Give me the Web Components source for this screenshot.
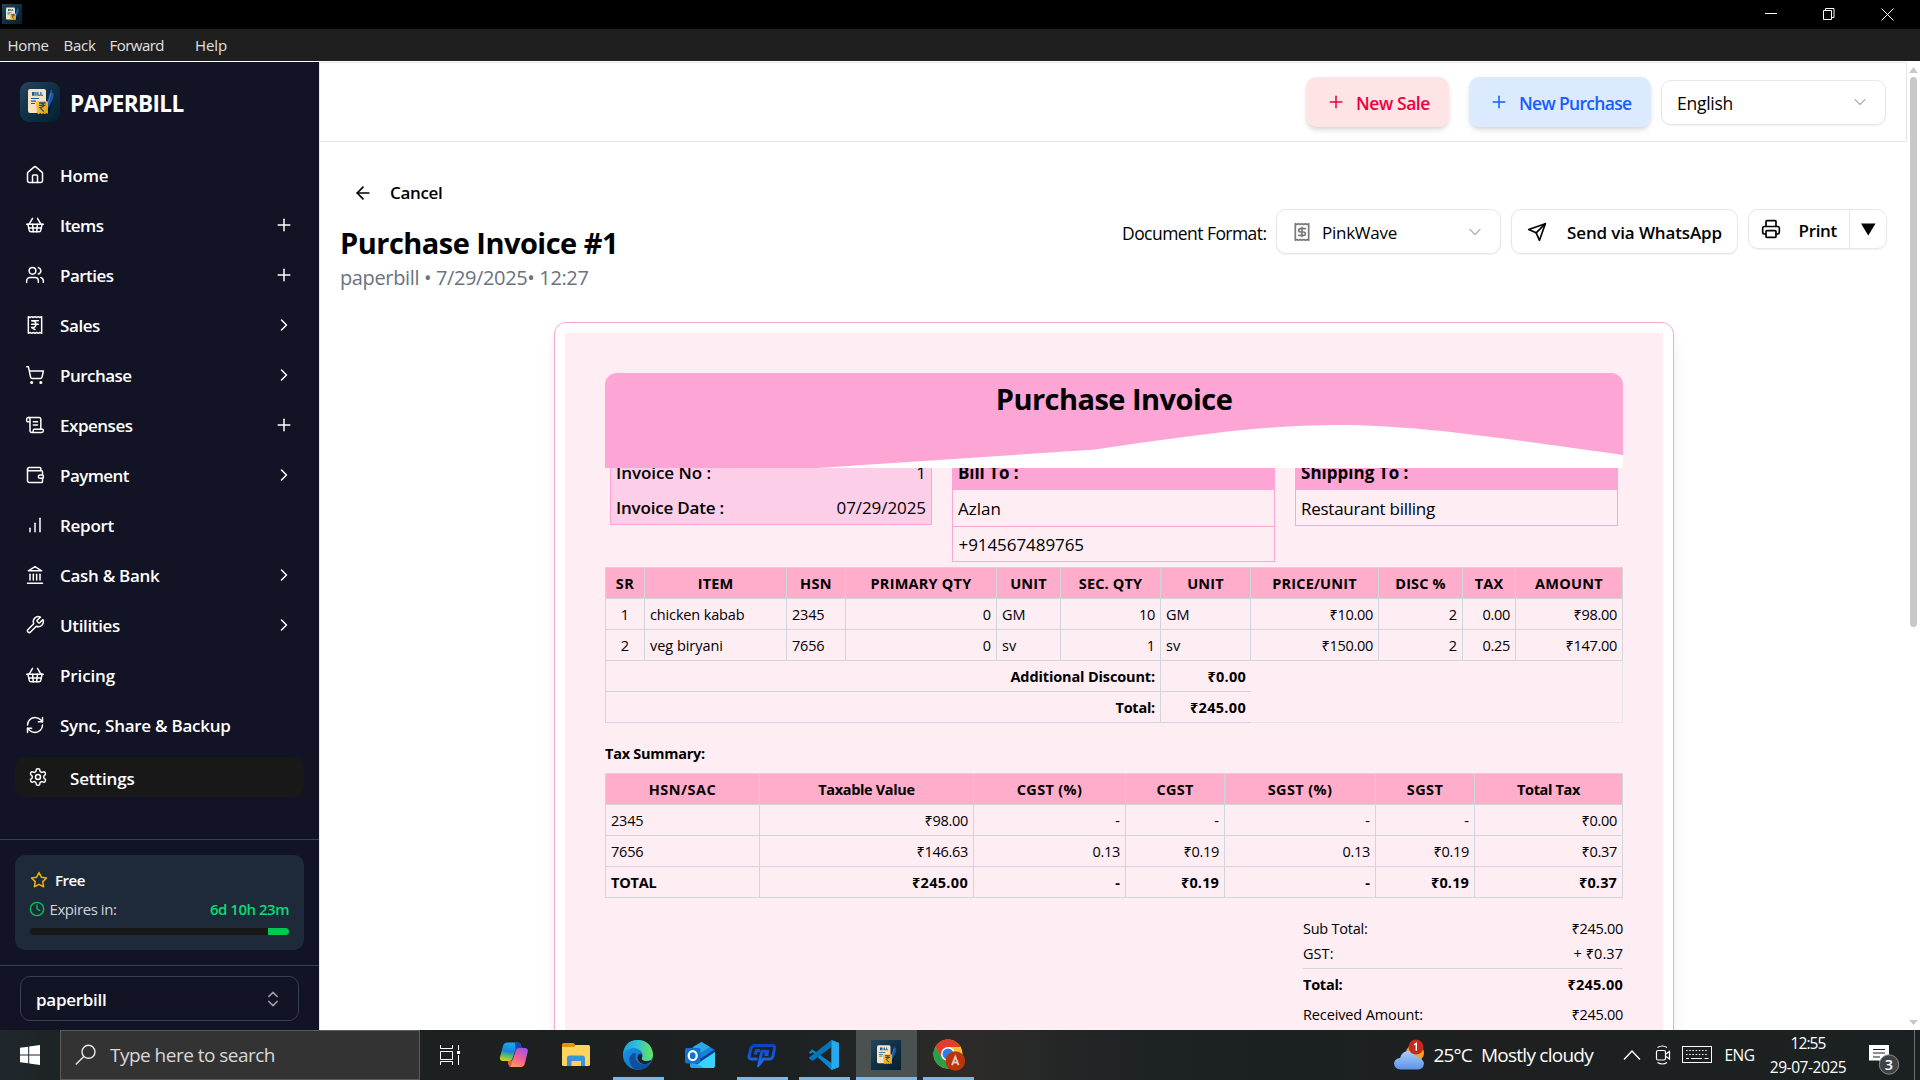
<!DOCTYPE html>
<html lang="en">
<head>
<meta charset="utf-8">
<title>Paperbill</title>
<style>
html,body{margin:0;padding:0;height:100%;overflow:hidden;background:#fff}
body{font-family:"Open Sans","Noto Sans",sans-serif;color:#000}
</style>
</head>
<body>
<bill-app></bill-app>
<script>
const define=(name,html,after)=>{
  const t=document.createElement('template');
  t.innerHTML=html;
  customElements.define(name,class extends HTMLElement{
    connectedCallback(){
      if(this.shadowRoot)return;
      const r=this.attachShadow({mode:'open'});
      r.append(t.content.cloneNode(true));
      if(after)after(this,r);
    }
  });
};

/* One line of text: s = size, b = weight, c = colour, w = advance width, y = drop below centre */
define('ui-text',`<style>:host{display:inline-block;white-space:nowrap;line-height:1.2;flex:none;text-align:left;padding-top:2px}</style><slot></slot>`,(h)=>{
  const a=n=>h.getAttribute(n);
  if(a('s'))h.style.fontSize=a('s')+'px';
  if(a('b'))h.style.fontWeight=a('b');
  if(a('c'))h.style.color=a('c');
  if(a('y'))h.style.paddingTop=2*a('y')+'px';
  const w=parseFloat(a('w')),n=h.textContent.length;
  if(w&&n>1){
    const nat=h.getBoundingClientRect().width;
    h.style.letterSpacing=((w-nat)/n).toFixed(4)+'px';
    h.style.width=w+'px';
  }
});

const ICONS={
 home:'<path d="M15 21v-8a1 1 0 0 0-1-1h-4a1 1 0 0 0-1 1v8"/><path d="M3 10a2 2 0 0 1 .709-1.528l7-5.999a2 2 0 0 1 2.582 0l7 5.999A2 2 0 0 1 21 10v9a2 2 0 0 1-2 2H5a2 2 0 0 1-2-2z"/>',
 basket:'<path d="m15 11-1 9"/><path d="m19 11-4-7"/><path d="M2 11h20"/><path d="m3.5 11 1.6 7.4a2 2 0 0 0 2 1.6h9.8a2 2 0 0 0 2-1.6l1.7-7.4"/><path d="M4.5 15.5h15"/><path d="m5 11 4-7"/><path d="m9 11 1 9"/>',
 users:'<path d="M16 21v-2a4 4 0 0 0-4-4H6a4 4 0 0 0-4 4v2"/><circle cx="9" cy="7" r="4"/><path d="M22 21v-2a4 4 0 0 0-3-3.87"/><path d="M16 3.13a4 4 0 0 1 0 7.75"/>',
 rupee:'<path d="M4 2v20l2-1 2 1 2-1 2 1 2-1 2 1 2-1 2 1V2l-2 1-2-1-2 1-2-1-2 1-2-1-2 1Z"/><path d="M8 7h8"/><path d="M12 17.5 8 15h1a4 4 0 0 0 0-8"/><path d="M8 11h8"/>',
 receipt:'<path d="M4 2v20l2-1 2 1 2-1 2 1 2-1 2 1 2-1 2 1V2l-2 1-2-1-2 1-2-1-2 1-2-1-2 1Z"/><path d="M16 8h-6a2 2 0 1 0 0 4h4a2 2 0 1 1 0 4H8"/><path d="M12 17.5v-11"/>',
 cart:'<circle cx="8" cy="21" r="1"/><circle cx="19" cy="21" r="1"/><path d="M2.05 2.05h2l2.66 12.42a2 2 0 0 0 2 1.58h9.78a2 2 0 0 0 1.95-1.57l1.65-7.43H5.12"/>',
 scroll:'<path d="M15 12h-5"/><path d="M15 8h-5"/><path d="M19 17V5a2 2 0 0 0-2-2H4"/><path d="M8 21h12a2 2 0 0 0 2-2v-1a1 1 0 0 0-1-1H11a1 1 0 0 0-1 1v1a2 2 0 1 1-4 0V5a2 2 0 1 0-4 0v2a1 1 0 0 0 1 1h3"/>',
 wallet:'<path d="M19 7V4a1 1 0 0 0-1-1H5a2 2 0 0 0 0 4h15a1 1 0 0 1 1 1v4h-3a2 2 0 0 0 0 4h3a1 1 0 0 0 1-1v-2a1 1 0 0 0-1-1"/><path d="M3 5v14a2 2 0 0 0 2 2h15a1 1 0 0 0 1-1v-4"/>',
 chart:'<path d="M12 20V10"/><path d="M18 20V4"/><path d="M6 20v-4"/>',
 bank:'<path d="M3 22h18"/><path d="M6 18v-7"/><path d="M10 18v-7"/><path d="M14 18v-7"/><path d="M18 18v-7"/><path d="m12 2 8 5H4Z"/>',
 wrench:'<path d="M14.7 6.3a1 1 0 0 0 0 1.4l1.6 1.6a1 1 0 0 0 1.4 0l3.77-3.77a6 6 0 0 1-7.94 7.94l-6.91 6.91a2.12 2.12 0 0 1-3-3l6.91-6.91a6 6 0 0 1 7.94-7.94l-3.76 3.76z"/>',
 sync:'<path d="M3 12a9 9 0 0 1 9-9 9.75 9.75 0 0 1 6.74 2.74L21 8"/><path d="M21 3v5h-5"/><path d="M21 12a9 9 0 0 1-9 9 9.75 9.75 0 0 1-6.74-2.74L3 16"/><path d="M8 16H3v5"/>',
 gear:'<path d="M12.22 2h-.44a2 2 0 0 0-2 2v.18a2 2 0 0 1-1 1.73l-.43.25a2 2 0 0 1-2 0l-.15-.08a2 2 0 0 0-2.73.73l-.22.38a2 2 0 0 0 .73 2.73l.15.1a2 2 0 0 1 1 1.72v.51a2 2 0 0 1-1 1.74l-.15.09a2 2 0 0 0-.73 2.73l.22.38a2 2 0 0 0 2.73.73l.15-.08a2 2 0 0 1 2 0l.43.25a2 2 0 0 1 1 1.73V20a2 2 0 0 0 2 2h.44a2 2 0 0 0 2-2v-.18a2 2 0 0 1 1-1.73l.43-.25a2 2 0 0 1 2 0l.15.08a2 2 0 0 0 2.73-.73l.22-.39a2 2 0 0 0-.73-2.73l-.15-.08a2 2 0 0 1-1-1.74v-.5a2 2 0 0 1 1-1.74l.15-.09a2 2 0 0 0 .73-2.73l-.22-.38a2 2 0 0 0-2.73-.73l-.15.08a2 2 0 0 1-2 0l-.43-.25a2 2 0 0 1-1-1.73V4a2 2 0 0 0-2-2z"/><circle cx="12" cy="12" r="3"/>',
 star:'<path d="M12 2l3.09 6.26L22 9.27l-5 4.87 1.18 6.88L12 17.77l-6.18 3.25L7 14.14 2 9.27l6.91-1.01z"/>',
 clock:'<circle cx="12" cy="12" r="10"/><path d="M12 6v6l4 2"/>',
 plus:'<path d="M5 12h14"/><path d="M12 5v14"/>',
 right:'<path d="m9 18 6-6-6-6"/>',
 down:'<path d="m6 9 6 6 6-6"/>',
 updown:'<path d="m7 15 5 5 5-5"/><path d="m7 9 5-5 5 5"/>',
 back:'<path d="m12 19-7-7 7-7"/><path d="M19 12H5"/>',
 send:'<path d="m22 2-7 20-4-9-9-4Z"/><path d="M22 2 11 13"/>',
 print:'<path d="M6 18H4a2 2 0 0 1-2-2v-5a2 2 0 0 1 2-2h16a2 2 0 0 1 2 2v5a2 2 0 0 1-2 2h-2"/><path d="M6 9V3a1 1 0 0 1 1-1h10a1 1 0 0 1 1 1v6"/><rect x="6" y="14" width="12" height="8" rx="1"/>'
};
define('ui-icon',`<style>:host{display:block;flex:none}svg{display:block;fill:none;stroke:currentColor;stroke-linecap:round;stroke-linejoin:round}</style><svg viewBox="0 0 24 24"></svg>`,(h,r)=>{
  const s=h.getAttribute('size')||20,v=r.querySelector('svg');
  v.setAttribute('width',s);v.setAttribute('height',s);
  v.style.strokeWidth=h.getAttribute('sw')||2;
  v.innerHTML=ICONS[h.getAttribute('name')];
  if(h.getAttribute('c'))h.style.color=h.getAttribute('c');
});

define('bill-logo',`<style>:host{display:block;flex:none}svg{display:block;width:100%;height:100%;border-radius:var(--r,0)}</style>
<svg viewBox="0 0 40 40"><defs><linearGradient id="g" x1="0" y1="0" x2="1" y2="1"><stop offset="0" stop-color="#24455c"/><stop offset=".5" stop-color="#0f3044"/><stop offset="1" stop-color="#04202f"/></linearGradient><linearGradient id="y" x1="0" y1="0" x2="1" y2="1"><stop offset="0" stop-color="#ffc93c"/><stop offset="1" stop-color="#dd9c16"/></linearGradient></defs>
<rect width="40" height="40" fill="url(#g)"/>
<path d="M30 14l4.500-2-5 18-3 3z" fill="#03131f" opacity=".7"/>
<path d="M8 9q0-2 2-2h14q2 0 2 2v20q0 2-2 2H10q-2 0-2-2z" fill="#f6e3c4"/>
<g fill="#1c5a96"><path d="M12 10h2.600v3.800H12zM15.300 10h1.300v3.800h-1.300zM17.300 10h1.200v2.800h1.500v1h-2.700zM20.300 10h1.200v2.800h1.500v1h-2.700z"/><path d="M11 16h8v1.100h-8zM11 18.600h5v1.100h-5zM11 21h4v1.100h-4z"/></g>
<path d="M30.500 8.500l1.400-1 .6.500-.5 2.500 1.500.6q1 2-.5 5.900L29.500 24l-2.600 4.500-.4-5z" fill="#1b559f"/><path d="M31 11l-3.700 12" stroke="#4688d6" stroke-width=".8"/>
<path d="M16 20.500q0-1.500 1.500-1.500h9q1.500 0 1.500 1.500V32l-1.700-1-1.500 1.200-1.500-1.200-1.500 1.200-1.500-1.200-1.500 1.200-1.800-1.200z" fill="url(#y)"/>
<path d="M19 21h6.500M19 23.300h6.500M19 21h1.500q3 .2 3 2.300t-3.500 2.300l3.800 4" fill="none" stroke="#164d80" stroke-width="1.300"/></svg>`);

define('title-bar',`<style>:host{display:flex;align-items:center;height:29px;background:#000;padding-left:2px;flex:none}bill-logo{width:20px;height:20px;margin-top:-1px}.b{margin-left:auto;display:flex}svg{display:block}</style>
<bill-logo></bill-logo><div class="b"><svg width="180" height="29" fill="none" stroke="#fff"><path d="M25 13.500h12M83.500 10.500h8v9h-8zM85.500 10.500v-2h8.500v9h-2.500M141.500 8.500l12 12M153.500 8.500l-12 12"/></svg></div>`);

define('menu-bar',`<style>:host{display:flex;align-items:center;height:32px;background:#1f1f1f;border-bottom:1px solid #fff;flex:none;padding-left:7.500px;color:#e0e0e0}</style>
<ui-text y="0" s="15" w="41">Home</ui-text><ui-text y="0" s="15" w="32" style="margin-left:15px">Back</ui-text><ui-text y="0" s="15" w="54.500" style="margin-left:14px">Forward</ui-text><ui-text y="0" s="15" w="32" style="margin-left:31px">Help</ui-text>`);

define('nav-item',`<style>:host{display:flex;align-items:center;height:50px;padding:0 25px;color:#fff}ui-text{margin-left:15px}.e{margin-left:auto}
:host([active]){margin:7px 15px 0;height:40px;padding:0 13px;background:#181818;border-radius:10px}:host([active]) ui-text{margin-left:22px}</style>
<slot></slot>`,(h,r)=>{
  const i=document.createElement('ui-icon');i.setAttribute('name',h.getAttribute('icon'));i.setAttribute('sw','1.8');
  r.append(i);
  const t=document.createElement('ui-text');t.textContent=h.getAttribute('label');
  if(h.hasAttribute('active'))t.setAttribute('y',2);
  t.setAttribute('s',17);t.setAttribute('b',600);t.setAttribute('w',h.getAttribute('w')-1);r.append(t);
  const e=h.getAttribute('end');
  if(e){const x=document.createElement('ui-icon');x.className='e';x.setAttribute('name',e);x.setAttribute('sw','1.8');r.append(x);}
});

define('plan-card',`<style>:host{display:flex;flex-direction:column;box-sizing:border-box;height:95px;margin:15px;padding:14px 15px 15px;border-radius:10px;background:#1e2939}
div{display:flex;align-items:center}.a{height:22px}.b{height:22px;margin-top:8px}.bar{height:7px;border-radius:4px;background:#181818;margin-top:10px;overflow:hidden}.bar i{display:block;width:21px;height:7px;margin-left:auto;background:#00c950}</style>
<div class="a"><ui-icon name="star" size="18" c="#f0b100" style="margin-top:1px"></ui-icon><ui-text s="15" b="600" w="30" c="#fff" style="margin-left:7px">Free</ui-text></div>
<div class="b"><ui-icon name="clock" size="16" c="#00c950" style="margin-top:2px;margin-left:-1px"></ui-icon><ui-text s="15" y="1.500" w="67" c="#d1d5dc" style="margin-left:4.500px">Expires in:</ui-text><ui-text s="15" y="1.500" b="600" w="79" c="#05df72" style="margin-left:auto">6d 10h 23m</ui-text></div>
<div class="bar"><i></i></div>`);

define('side-bar',`<style>:host{display:flex;flex-direction:column;width:319px;height:968px;background:#121324;border-right:1px solid #e5e7eb;flex:none}
.brand{display:flex;align-items:center;padding:20px 20px 0;height:40px;gap:10px}.brand bill-logo{width:40px;height:40px;--r:9px}
nav{margin-top:28px;flex:1}
.plan{border-top:1px solid #364153;height:125px}
.sel{border-top:1px solid #364153;height:65px;padding:10px 20px 0;box-sizing:border-box}.box{display:flex;align-items:center;justify-content:space-between;height:45px;box-sizing:border-box;border:1px solid #364153;border-radius:10px;padding:0 15px}</style>
<div class="brand"><bill-logo></bill-logo><ui-text s="22.500" b="700" w="113.500" c="#fff">PAPERBILL</ui-text></div>
<nav>
<nav-item icon="home" label="Home" w="49.500"></nav-item>
<nav-item icon="basket" label="Items" w="44.500" end="plus"></nav-item>
<nav-item icon="users" label="Parties" w="54.500" end="plus"></nav-item>
<nav-item icon="rupee" label="Sales" w="41" end="right"></nav-item>
<nav-item icon="cart" label="Purchase" w="72.500" end="right"></nav-item>
<nav-item icon="scroll" label="Expenses" w="73.500" end="plus"></nav-item>
<nav-item icon="wallet" label="Payment" w="70" end="right"></nav-item>
<nav-item icon="chart" label="Report" w="55"></nav-item>
<nav-item icon="bank" label="Cash &amp; Bank" w="100.500" end="right"></nav-item>
<nav-item icon="wrench" label="Utilities" w="61" end="right"></nav-item>
<nav-item icon="basket" label="Pricing" w="56"></nav-item>
<nav-item icon="sync" label="Sync, Share &amp; Backup" w="171.500"></nav-item>
<nav-item active icon="gear" label="Settings" w="65.500"></nav-item>
</nav>
<div class="plan"><plan-card></plan-card></div>
<div class="sel"><div class="box"><ui-text s="17" y="1.500" b="600" w="70.500" c="#fff">paperbill</ui-text><ui-icon name="updown" c="#9a9ca6"></ui-icon></div></div>`);

define('action-button',`<style>:host{display:flex;align-items:center;box-sizing:border-box;height:50px;border-radius:10px;font-weight:600;box-shadow:0 4px 6px -1px rgba(0,0,0,.12),0 2px 4px -2px rgba(0,0,0,.12)}</style><slot></slot>`);
define('select-box',`<style>:host{display:flex;align-items:center;box-sizing:border-box;height:45px;border:1px solid #e5e7eb;border-radius:10px;background:#fff;box-shadow:0 1px 2px rgba(0,0,0,.06)}</style><slot></slot>`);

define('top-bar',`<style>:host{display:flex;align-items:center;box-sizing:border-box;height:80px;width:1587px;border:1px solid #e5e7eb;border-left:0;padding-right:20px;justify-content:flex-end}</style>
<action-button style="width:143px;background:#ffe4e6;color:#ec003f;padding-left:20px;margin-right:20px"><ui-icon name="plus" sw="1.800"></ui-icon><ui-text s="17.500" b="600" w="74" style="margin-left:10px">New Sale</ui-text></action-button>
<action-button style="width:182px;background:#dbeafe;color:#155dfc;padding-left:20px;margin-right:10px"><ui-icon name="plus" sw="1.800"></ui-icon><ui-text s="17.500" b="600" w="112.500" style="margin-left:10px">New Purchase</ui-text></action-button>
<select-box style="width:225px;padding:0 15px"><ui-text s="17.500" y="1.500" w="56">English</ui-text><ui-icon name="down" size="20" c="#b5b5b5" sw="1.600" style="margin-left:auto"></ui-icon></select-box>`);

define('page-head',`<style>:host{display:flex;justify-content:space-between;height:180px;width:1567px;padding-left:20px;box-sizing:border-box}
.l{padding-top:37px}.c{display:flex;align-items:center;height:28px;padding-left:13px}.t{display:flex;height:40px;align-items:center;margin-top:16px}.s{display:flex;height:30px;align-items:center}
.r{display:flex;align-items:flex-start;padding-top:67px}.h{height:45px;display:flex;align-items:center}.p{display:flex;box-sizing:border-box;width:139px;height:40px;border:1px solid #e5e7eb;border-radius:10px;align-items:center;box-shadow:0 1px 2px rgba(0,0,0,.06);margin-left:10px}.d{border-left:1px solid #e5e7eb;height:38px;width:36px;display:flex;align-items:center;justify-content:center;margin-left:auto}</style>
<div class="l"><div class="c"><ui-icon name="back" style="margin-top:-1px"></ui-icon><ui-text s="17" y=".5" b="600" w="52.500" style="margin-left:17px">Cancel</ui-text></div>
<div class="t"><ui-text y="0" s="29" b="700" w="278">Purchase Invoice #1</ui-text></div>
<div class="s"><ui-text y="0" s="20" w="248.500" c="#6a7282">paperbill • 7/29/2025• 12:27</ui-text></div></div>
<div class="r"><div class="h"><ui-text s="17.500" y="1.500" w="144.500" style="margin-right:9.500px">Document Format:</ui-text></div>
<select-box style="width:225px;padding:0 15px"><ui-icon name="receipt" size="20" c="#777" sw="2"></ui-icon><ui-text s="17" y="1.500" w="75" style="margin-left:10px">PinkWave</ui-text><ui-icon name="down" size="20" c="#b5b5b5" sw="1.600" style="margin-left:auto"></ui-icon></select-box>
<select-box style="width:227px;padding:0 15px;margin-left:10px"><ui-icon name="send" size="20"></ui-icon><ui-text s="17" y="1.500" b="600" w="155" style="margin-left:20px">Send via WhatsApp</ui-text></select-box>
<div class="p"><ui-icon name="print" size="20" style="margin-left:12px"></ui-icon><ui-text s="17" y="2" b="600" w="38.500" style="margin-left:17.500px">Print</ui-text><div class="d"><svg width="15" height="13" style="margin-top:1px"><path d="M0 .5h14.500L7.250 12.500z"/></svg></div></div></div>`);

define('info-box',`<style>:host{display:block;box-sizing:border-box;width:323px;border:1px solid #fda5d5;border-top:0;align-self:flex-start}
::slotted(div){display:flex;justify-content:space-between;align-items:center;height:35px;padding:0 5px;border-top:1px solid #fda5d5;box-sizing:border-box}::slotted(div.cap){background:#fda5d5}::slotted(div.first){border-top-color:transparent}
:host([fill]){background:#fccee8;width:322px}:host([fill]) ::slotted(div){border-top:0}</style><slot></slot>`);

/* Grid table: columns, then rows of [text, class, weight, width, span] */
define('grid-table',`<style>:host{display:grid;box-sizing:border-box;width:1018px;grid-auto-rows:31px;border-left:1px solid #d1d5dc;border-top:1px solid #d1d5dc}
div{display:flex;align-items:center;box-sizing:border-box;border-right:1px solid #d1d5dc;border-bottom:1px solid #d1d5dc;padding:0 5px 0 5px}
.h{background:#ffadcb;justify-content:center}.r{justify-content:flex-end}.c{justify-content:center}.nr{border-right:0}.eb{border-right-color:#e5e7eb;border-bottom:0}.ee{border-right-color:#e5e7eb;border-bottom-color:#e5e7eb}</style>`,(h,r)=>{
  const d=TABLES[h.getAttribute('data')];
  h.style.gridTemplateColumns=d.cols.map(x=>x+'px').join(' ');
  for(const row of d.rows)for(const [t,cls,b,w,span] of row){
    const c=document.createElement('div');c.className=cls;
    if(span)c.style.gridColumn='span '+span;
    if(t){const x=document.createElement('ui-text');x.textContent=t;x.setAttribute('s',14.5);x.setAttribute('b',b);x.setAttribute('w',w);c.append(x);}
    r.append(c);
  }
});
const H=(t,w)=>[t,'h',700,w+.5];
const L=(t,w,b=400)=>[t,'l',b,w+.5];
const R=(t,w,b=400)=>[t,'r',b,w+.5];
const TABLES={
 items:{cols:[39,142,59,151,64,100,90,128,84,53,107],rows:[
  [H('SR',18),H('ITEM',35),H('HSN',31.5),H('PRIMARY QTY',100.5),H('UNIT',36),H('SEC. QTY',63),H('UNIT',36),H('PRICE/UNIT',84),H('DISC %',50),H('TAX',28),H('AMOUNT',67.5)],
  [['1','c',400,0],L('chicken kabab',94),L('2345',32),['0','r',400,0],L('GM',23),R('10',15.5),L('GM',23),R('₹10.00',43),['2','r',400,0],R('0.00',27),R('₹98.00',43)],
  [['2','c',400,0],L('veg biryani',72.5),L('7656',32),['0','r',400,0],L('sv',14),['1','r',400,0],L('sv',14),R('₹150.00',51),['2','r',400,0],R('0.25',27),R('₹147.00',51)],
  [['Additional Discount:','r',700,144.5,6],['₹0.00','r nr',700,38.5],['','eb',400,0,4]],
  [['Total:','r',700,39.5,6],['₹245.00','r nr',700,56],['','ee',400,0,4]]
 ]},
 tax:{cols:[154,214,152,99,151,99,148],rows:[
  [H('HSN/SAC',67),H('Taxable Value',96),H('CGST (%)',65),H('CGST',36.5),H('SGST (%)',64),H('SGST',36),H('Total Tax',62.5)],
  [L('2345',32),R('₹98.00',43),['-','r',400,0],['-','r',400,0],['-','r',400,0],['-','r',400,0],R('₹0.00',35)],
  [L('7656',32),R('₹146.63',51),R('0.13',27),R('₹0.19',35),R('0.13',27),R('₹0.19',35),R('₹0.37',35)],
  [L('TOTAL',45,700),R('₹245.00',55.5,700),['-','r',700,0],R('₹0.19',37.5,700),['-','r',700,0],R('₹0.19',37.5,700),R('₹0.37',37.5,700)]
 ]}
};

define('invoice-card',`<style>:host{display:block;box-sizing:border-box;width:1120px;height:900px;margin-left:234px;border:1px solid #fda5d5;border-radius:12px;padding:10px;background:#fff;box-shadow:0 12px 19px -4px rgba(0,0,0,.1),0 5px 8px -5px rgba(0,0,0,.1)}
.in{background:#ffedf4;height:900px;padding:40px;box-sizing:border-box}
.hd{position:relative;z-index:1;height:95px;background:#fda5d5;border-radius:12px 12px 0 0;overflow:hidden;display:grid;justify-items:center}
.hd svg{grid-area:1/1;display:block}.hd ui-text{grid-area:1/1;margin-top:9px}
.info{display:flex;gap:20px;height:108px;margin:-14px 5px 0;box-sizing:border-box}
.ttl{display:flex;align-items:center;height:50px;padding-top:9px;box-sizing:border-box}
.sum{width:320px;margin:18px 0 0 auto}.sum div{display:flex;justify-content:space-between;align-items:center;height:25px}.sum .t{border-top:1px solid #d1d5dc;height:31px;margin-top:2px}.sum .x{height:29px}</style>
<div class="in"><div class="hd"><svg width="1018" height="95"><path fill="#fff" d="M205 95.500L490 76.500C570 65 653 52 732 52C816 52 900 66 1018 82V95.500Z"/></svg><ui-text y="0" s="29" b="700" w="236.500">Purchase Invoice</ui-text></div>
<div class="info"><info-box fill><div><ui-text y="2" s="17" b="600" w="95">Invoice No :</ui-text><ui-text y="2" s="17">1</ui-text></div><div><ui-text y="1.500" s="17" b="600" w="108">Invoice Date :</ui-text><ui-text y="1.500" s="17" w="89.500">07/29/2025</ui-text></div></info-box>
<info-box><div class="cap" style="height:36px"><ui-text s="17" b="700" w="60.500">Bill To :</ui-text></div><div class="first" style="height:36px"><ui-text s="17" w="43">Azlan</ui-text></div><div style="height:35px"><ui-text s="17" w="125.500" style="margin-left:.5px">+914567489765</ui-text></div></info-box>
<info-box><div class="cap" style="height:36px"><ui-text s="17" b="700" w="107.500">Shipping To :</ui-text></div><div class="first" style="height:35px"><ui-text s="17" w="134">Restaurant billing</ui-text></div></info-box></div>
<grid-table data="items" style="margin-top:5px"></grid-table>
<div class="ttl"><ui-text s="14.500" b="700" w="100">Tax Summary:</ui-text></div>
<grid-table data="tax"></grid-table>
<div class="sum"><div><ui-text y="0" s="14.500" w="64.500">Sub Total:</ui-text><ui-text y="0" s="14.500" w="51.500">₹245.00</ui-text></div>
<div><ui-text y="0" s="14.500" w="30.500">GST:</ui-text><ui-text y="0" s="14.500" w="49.500">+ ₹0.37</ui-text></div>
<div class="t"><ui-text y="0" s="14.500" b="700" w="39.500">Total:</ui-text><ui-text y="0" s="14.500" b="700" w="55.500">₹245.00</ui-text></div>
<div class="x"><ui-text y="0" s="14.500" w="120">Received Amount:</ui-text><ui-text y="0" s="14.500" w="51.500">₹245.00</ui-text></div></div></div>`);

define('scroll-rail',`<style>:host{display:flex;flex-direction:column;align-items:center;width:13px;height:968px;flex:none;background:#fff}i{width:7px;height:550px;border-radius:4px;background:#c8c8c8;margin-top:4px}svg{display:block}.u{margin-top:5px}.d{margin-top:auto;margin-bottom:4px}</style>
<svg class="u" width="9" height="6"><path d="M0 6h9L4.500 0z" fill="#c8c8c8"/></svg><i></i><svg class="d" width="9" height="6"><path d="M0 0h9L4.500 5z" fill="#c8c8c8"/></svg>`);

define('task-bar',`<style>:host{display:flex;height:50px;background:linear-gradient(90deg,#20272d 0,#1e2425 50px,#1d2020 440px,#1c2123 790px,#2c2b29 970px,#1d2224 1150px,#1b2122 1300px,#1e2020 1500px,#1b2122 1920px);align-items:stretch;flex:none;color:#fff;width:1920px}
.st{width:60px;display:flex;align-items:center;justify-content:center}
.se{width:360px;box-sizing:border-box;background:#333;border:1px solid #5b5b5b;display:flex;align-items:center;padding-left:14px}
.tv{width:63px;display:flex;align-items:center;padding-left:20px;box-sizing:border-box}
.ap{width:62px;display:flex;flex-direction:column;align-items:center;justify-content:center;box-sizing:border-box;background:linear-gradient(#78b9ed,#78b9ed) no-repeat center 47px/0 3px}
.ap.on{background-size:51px 3px}.ap.act{background-color:#4b5051;background-size:62px 3px;width:61px;margin-left:1px}.ap svg{display:block}
.ap bill-logo{width:30px;height:30px;margin-right:1px}
.tray{margin-left:auto;display:flex;align-items:center;width:527px}.clk{display:flex;flex-direction:column;align-items:center;width:77px;margin-left:15px}.clk ui-text{height:24px;line-height:24px}
</style>
<div class="st"><svg width="20" height="20" viewBox="0 0 20 20" fill="#fff"><path d="M0 2.800L8.200 1.700V9.500H0zM9.200 1.500L20 0v9.500H9.200zM0 10.500h8.200v7.800L0 17.200zM9.200 10.500H20V20L9.200 18.500z"/></svg></div>
<div class="se"><svg width="22" height="22" fill="none" stroke="#e8e8e8" stroke-width="1.400"><circle cx="13.500" cy="7.800" r="6.500"/><path d="M8.800 12.500L.8 20.500"/></svg><ui-text y="0" s="19" w="165" c="#d8d8d8" style="margin-left:13px">Type here to search</ui-text></div>
<div class="tv"><svg width="20" height="20" fill="none" stroke="#fff"><path d="M.5 0v3.500h12V0M.5 6.500h12v8H.5zM.5 20v-3.500h12V20M18.500 0v5M18.500 10v10"/><path d="M17 6h3v3h-3z" fill="#fff" stroke="none"/></svg></div>
<div class="ap"><svg width="30" height="30" viewBox="0 0 30 30"><defs><linearGradient id="c1" x1=".3" y1="0" x2=".1" y2="1"><stop offset="0" stop-color="#1aa7ee"/><stop offset=".45" stop-color="#1d83d8"/><stop offset=".7" stop-color="#5dc069"/><stop offset="1" stop-color="#f3cd1a"/></linearGradient><linearGradient id="c2" x1=".8" y1="0" x2=".3" y2="1"><stop offset="0" stop-color="#9c55ea"/><stop offset=".5" stop-color="#ee5c9c"/><stop offset="1" stop-color="#ff9a5c"/></linearGradient></defs>
<path d="M8 2.500h11q2 0 2.700 2l1 3.500h-3q-2.500 0-3.200 2.400L13.300 19q-.8 2-3 2H4q-3.500 0-3-4L4 6q1-3.500 4-3.500z" fill="url(#c1)"/><path d="M16 2.500h3q2 0 2.700 2l1 3.500h-3q-2 0-3 2z" fill="#1846b5"/><path d="M22 27H12.500q-2 0-2.700-2l-1-3.700H11q2.300 0 3-2.300l3-9q.8-2 2.800-2H26q3.200 0 2.800 3.500L26 23q-1 4-4 4z" fill="url(#c2)"/><path d="M8.800 21.200H11q2 0 2.800-2L11.800 27q-1.500-.3-2-2z" fill="#f25a3d"/></svg></div>
<div class="ap"><svg width="28" height="24" viewBox="0 0 28 24"><path d="M0 1.500Q0 0 1.500 0h10l2 2-2 2H0z" fill="#dd9a00"/><path d="M0 4h11.500l2-2H26.500Q28 2 28 3.500v18Q28 23 26.500 23h-25Q0 23 0 21.500z" fill="#ffd35f"/><path d="M5 23V15q0-2.500 2.500-2.500h13Q23 12.500 23 15v8h-4v-5H9.500v5z" fill="#3d92d8"/></svg></div>
<div class="ap on"><svg width="30" height="30" viewBox="0 0 30 30"><defs><linearGradient id="e1"><stop offset="0" stop-color="#1b9de0"/><stop offset=".5" stop-color="#33c3cf"/><stop offset="1" stop-color="#6be64f"/></linearGradient><linearGradient id="e2" x2="1" y2="1"><stop offset="0" stop-color="#1c98e8"/><stop offset="1" stop-color="#0668c8"/></linearGradient></defs><circle cx="15" cy="15" r="15" fill="url(#e2)"/><path d="M13 14q-2 6 3 9t11 0q-4 7-12 7-6-1-8-7t2-9q2-2 4 0z" fill="#104f9c"/><path d="M30 14q.5 7-7 7-5 0-4.500-3 2-2 .5-5.500Q16 8 10 8 3 9 0 15 1 0 15 0 28 .5 30 14z" fill="url(#e1)"/><path d="M19 17.500q-1 1.800 1 3 3 1.500 7.500 0l1 .8q-4 4-9 2.500t-5-7q1-3.800 3.500-3 2 1.500 1 3.700z" fill="#1d2121"/></svg></div>
<div class="ap"><svg width="31" height="26" viewBox="0 0 31 26"><path d="M5 7L16.500 0 30 8v8H5z" fill="#1383d4"/><path d="M8 5l8.500-5L25 5 14 12z" fill="#2aa9e6"/><path d="M30 7v4L15 21V17z" fill="#0a3f96"/><path d="M30 10v14q0 2-2 2H8l7-6z" fill="#3bd2fb"/><path d="M5 18v6q0 2 2 2h12z" fill="#2aa5ea"/><rect y="6" width="15.500" height="15.500" rx="1.800" fill="#0f73cf"/><ellipse cx="7.700" cy="13.700" rx="4" ry="4.500" fill="none" stroke="#fff" stroke-width="2.200"/></svg></div>
<div class="ap on"><svg width="30" height="24" viewBox="0 0 30 24"><defs><linearGradient id="z" x2="0" y2="1"><stop offset="0" stop-color="#0b45c4"/><stop offset="1" stop-color="#1b6bef"/></linearGradient></defs><path d="M10.500 16H5Q1.300 16 2.200 12.500L4 5.500Q5 2.500 8 2.500h17q3.200 0 2.500 3L26 13q-.7 3-3.500 3H16.500l-4.500 5.500.7-4L15 8.200h5.500L20 11.500h-2.500M8 11.500L9.500 7.500H13" fill="none" stroke="url(#z)" stroke-width="3"/></svg></div>
<div class="ap on"><svg width="30" height="30" viewBox="0 0 30 30"><path d="M22.500 0L30 3v24l-7.500 3L3.500 12.200 1 14 .0 12.200 3.200 9.300 11 15 22.500 23z" fill="#0a86cf"/><path d="M22.500 0v7L3.500 21 .3 18.800 0 17.500z" fill="#0874b8"/><path d="M22.500 0L30 3v24l-7.500 3z" fill="#27a9f1"/></svg></div>
<div class="ap act"><bill-logo></bill-logo></div>
<div class="ap on"><svg width="32" height="32" viewBox="0 0 32 32" style="margin-left:2px"><circle cx="15" cy="15" r="14.500" fill="#fcc52d"/><path d="M15 8h12.700A14.500 14.500 0 0 0 2.400 7.800L8.500 18z" fill="#e33b2e"/><path d="M2.400 7.800A14.500 14.500 0 0 0 15 29.500l6-11H9z" fill="#299f4c"/><circle cx="15" cy="15" r="7" fill="#fff"/><circle cx="15" cy="15" r="5.500" fill="#2e7de9"/><circle cx="22.300" cy="22" r="9.800" fill="#bb340c"/><path d="M19 26.200l3.300-8.500 3.300 8.500M20.200 23.500h4.200" fill="none" stroke="#e8c8bc" stroke-width="1.800"/></svg></div>
<div class="tray"><svg width="34" height="34" viewBox="0 0 34 34" style="flex:none"><defs><linearGradient id="w" x2="0" y2="1"><stop offset="0" stop-color="#a9cdfa"/><stop offset="1" stop-color="#5e93e6"/></linearGradient></defs><circle cx="22" cy="15" r="9" fill="#f2a51f"/><path d="M7.500 31.500q-6-.3-6.500-6 .5-5 6-5.500 2-7 8.500-7 6 .3 8 6 6 .8 7.500 6-.3 6-6 6.500z" fill="url(#w)"/><circle cx="23" cy="9" r="7.500" fill="#c42b1c"/><path d="M21 6.800l2.300-1.500v7.500" stroke="#fff" stroke-width="1.400" fill="none"/></svg>
<ui-text y="0" s="19" w="38.500" style="margin-left:6.500px">25°C</ui-text><ui-text y="0" s="19" w="112" style="margin-left:9px">Mostly cloudy</ui-text>
<svg width="18" height="12" fill="none" stroke="#fff" stroke-width="1.400" style="margin-left:30px;flex:none"><path d="M1 10.500L9 2l8 8.500"/></svg>
<svg width="16" height="20" fill="none" stroke="#fff" stroke-width="1.200" style="margin-left:14px;flex:none"><rect x="1.500" y="5.500" width="9" height="9.500" rx="1.500"/><path d="M11 9l3.500-2.500v7.500L11 11.500M2.500 2.500q5-3 9.500 0M2.500 17.500q5 3 9.500 0"/></svg>
<svg width="30" height="18" fill="none" stroke="#fff" style="margin-left:10.500px;flex:none"><rect x=".5" y=".5" width="29" height="16"/><path d="M4 4.500h22M4 8.500h22" stroke-dasharray="1.500 1.700"/><path d="M4 12.500h3M9 12.500h11M22.500 12.500h4"/></svg>
<ui-text y="0" s="15.500" w="30" style="margin-left:13px">ENG</ui-text>
<div class="clk"><ui-text y="0" s="15.500" w="35">12:55</ui-text><ui-text y="0" s="15.500" w="76.500">29-07-2025</ui-text></div>
<svg width="52" height="50" style="margin-left:21px;flex:none"><path d="M1 15h20v15.500h-6v4l-4-4H1z" fill="#fff"/><path d="M5 19.500h12M5 23h12M5 27h7" stroke="#1b2122"/><circle cx="21" cy="34.500" r="9.700" fill="#404345" stroke="#8a8c8d"/><text x="21" y="40" fill="#fff" font-family="Open Sans" font-weight="600" font-size="14.500" text-anchor="middle">3</text><path d="M46.500 0v50" stroke="#6c7071"/></svg></div>`);

define('bill-app',`<style>:host{display:flex;flex-direction:column;width:1920px;height:1080px;overflow:hidden;background:#fff}
.m{display:flex;height:968px;overflow:hidden;flex:none}.c{width:1587px;height:968px;overflow:hidden}</style>
<title-bar></title-bar><menu-bar></menu-bar><div class="m"><side-bar></side-bar><div class="c"><top-bar></top-bar><page-head></page-head><invoice-card></invoice-card></div><scroll-rail></scroll-rail></div><task-bar></task-bar>`);
</script>
</body>
</html>
